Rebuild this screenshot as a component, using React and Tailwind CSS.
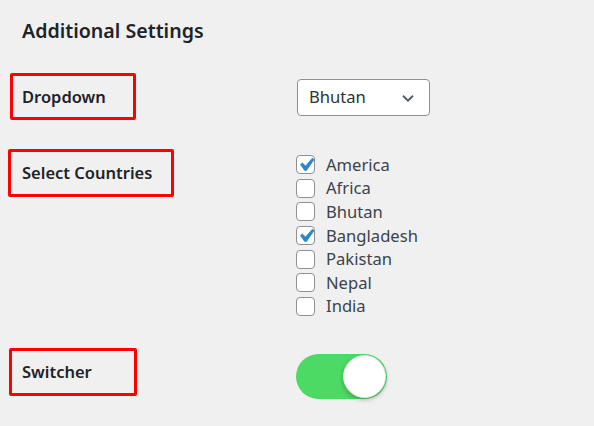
import React, { useState } from "react";

const countries = [
  { name: "America", checked: true },
  { name: "Africa", checked: false },
  { name: "Bhutan", checked: false },
  { name: "Bangladesh", checked: true },
  { name: "Pakistan", checked: false },
  { name: "Nepal", checked: false },
  { name: "India", checked: false },
];

function Check({ checked, label }) {
  return (
    <label className="flex items-center h-[23.6px] gap-[11px]">
      <span className="w-[19px] h-[19px] rounded-[4px] border border-[#8c8f94] bg-white flex items-center justify-center overflow-visible">
        {checked && (
          <svg viewBox="0 0 20 20" className="w-[26px] h-[26px] shrink-0 mt-[1px]">
            <path
              d="M14.83 4.89l1.34.94-5.81 8.38H9.02L5.78 9.67l1.34-1.25 2.57 2.4z"
              fill="#2a86c6"
              stroke="#2a86c6"
              strokeWidth="0.6"
            />
          </svg>
        )}
      </span>
      <span className="text-[16.6px] text-[#3c434a] pt-[1px]">{label}</span>
    </label>
  );
}

export default function App() {
  const [on] = useState(true);

  return (
    <div
      className="w-[594px] h-[426px] bg-[#f0f0f1] text-[#1d2327] overflow-hidden"
      style={{ fontFamily: '"Segoe UI", "Noto Sans", sans-serif' }}
    >
      <h2 className="pl-[22px] pt-[17px] text-[19.6px] leading-[28px] font-semibold">
        Additional Settings
      </h2>

      {/* Dropdown */}
      <div className="flex items-start mt-[28px] pl-[10px]">
        <div className="w-[286px] shrink-0">
          <div className="w-[126px] h-[47px] border-[3px] border-[#ff0000] rounded-[2px] flex items-center pl-[9px] pt-[1px]">
            <span className="text-[16.5px] font-semibold">Dropdown</span>
          </div>
        </div>
        <div className="mt-[6px] ml-[1px] w-[133px] h-[37px] border border-[#8c8f94] rounded-[4px] bg-white flex items-center justify-between pl-[11px] pr-[12px]">
          <span className="text-[16.6px] text-[#2c3338]">Bhutan</span>
          <svg viewBox="0 0 20 20" className="w-[18px] h-[18px]">
            <path
              d="M4.5 7.5l5.5 5.5 5.5-5.5"
              fill="none"
              stroke="#50575e"
              strokeWidth="2"
            />
          </svg>
        </div>
      </div>

      {/* Select Countries */}
      <div className="flex items-start mt-[29px] pl-[8px]">
        <div className="w-[288px] shrink-0">
          <div className="w-[166px] h-[48px] border-[3px] border-[#ff0000] rounded-[2px] flex items-center pl-[11px]">
            <span className="text-[16.5px] font-semibold">Select Countries</span>
          </div>
        </div>
        <div className="mt-[4px] flex flex-col">
          {countries.map((c) => (
            <Check key={c.name} checked={c.checked} label={c.name} />
          ))}
        </div>
      </div>

      {/* Switcher */}
      <div className="flex items-start mt-[30px] pl-[9px]">
        <div className="w-[287px] shrink-0">
          <div className="w-[128px] h-[48px] border-[3px] border-[#ff0000] rounded-[2px] flex items-center pl-[10px]">
            <span className="text-[16.5px] font-semibold">Switcher</span>
          </div>
        </div>
        <div
          className={`mt-[6px] w-[91px] h-[45px] rounded-full flex items-center ${
            on ? "bg-[#4cd964] justify-end" : "bg-[#d5d5d5] justify-start"
          }`}
        >
          <span className="w-[43px] h-[43px] mr-[1px] rounded-full bg-white border border-[#e5e5e5] shadow-[0_2px_4px_rgba(0,0,0,0.25)]" />
        </div>
      </div>
    </div>
  );
}
